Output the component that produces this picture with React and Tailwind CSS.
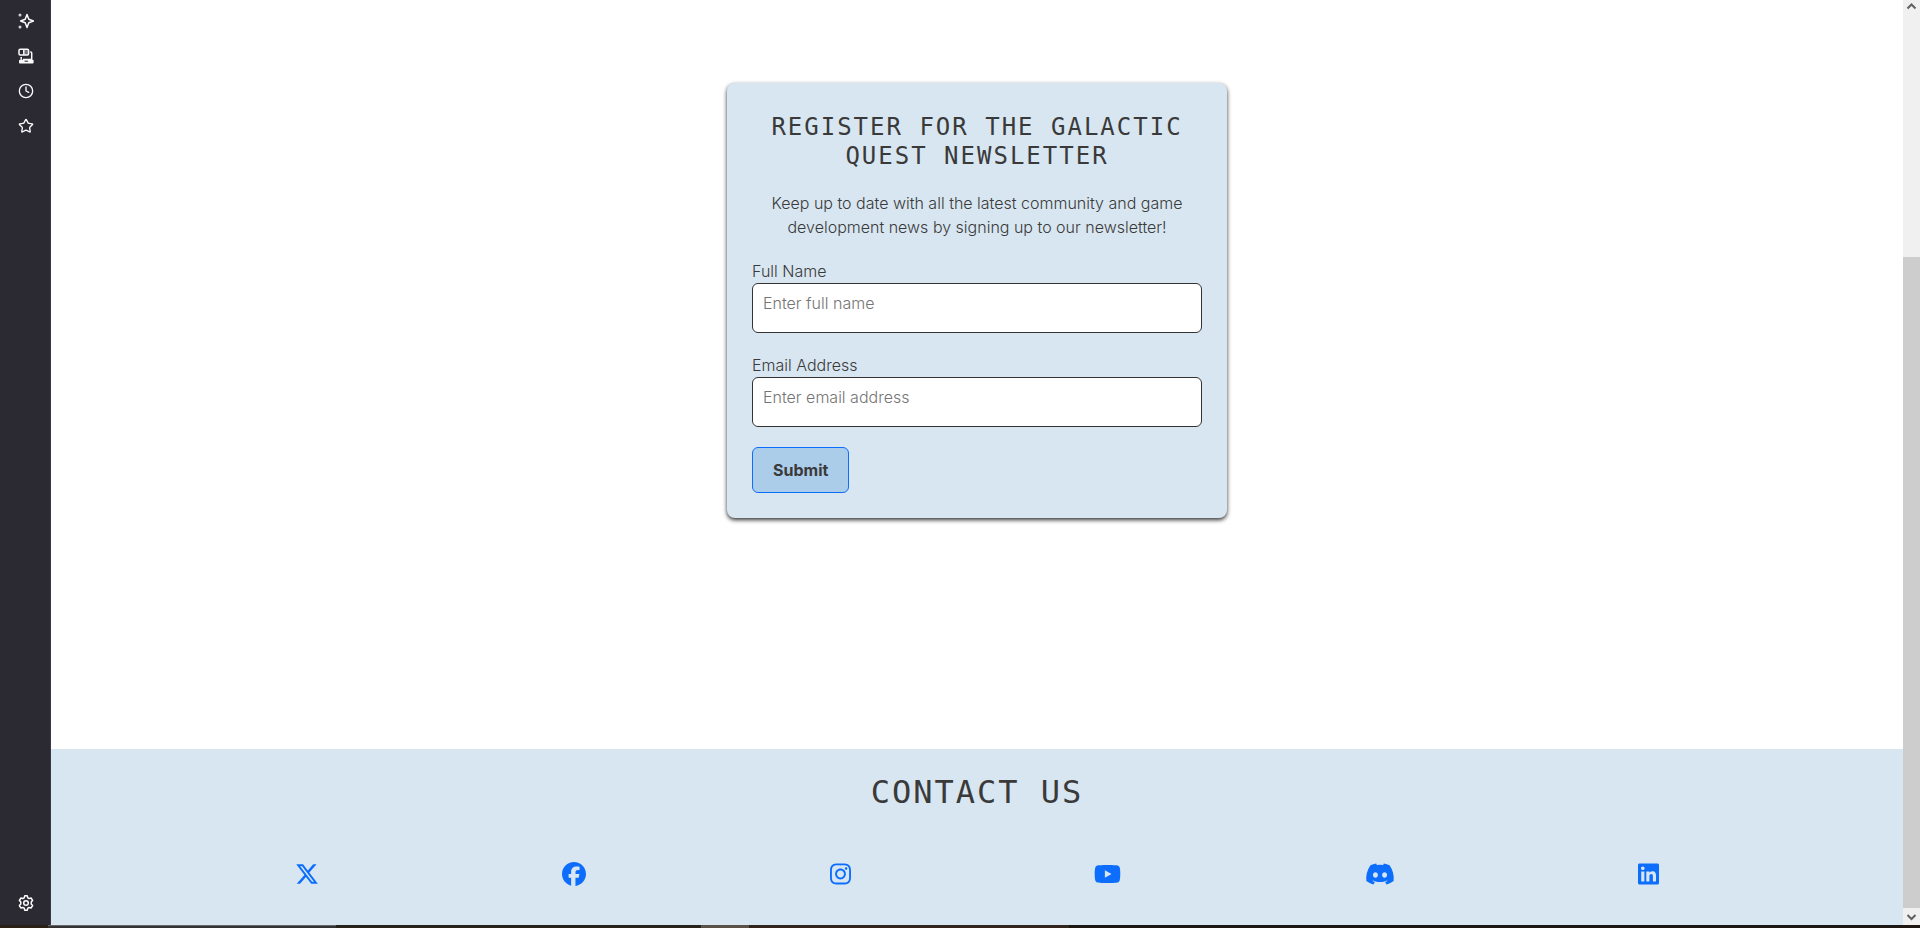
import React from "react";
import { FaXTwitter, FaFacebook, FaInstagram, FaYoutube, FaDiscord, FaLinkedin } from "react-icons/fa6";
import { Clock, Star } from "lucide-react";

const socials = [
  { label: "X", Icon: FaXTwitter, size: "h-6 w-6" },
  { label: "Facebook", Icon: FaFacebook, size: "h-6 w-6" },
  { label: "Instagram", Icon: FaInstagram, size: "h-6 w-[21px]" },
  { label: "YouTube", Icon: FaYoutube, size: "h-6 w-[27px]" },
  { label: "Discord", Icon: FaDiscord, size: "h-6 w-[30px]" },
  { label: "LinkedIn", Icon: FaLinkedin, size: "h-6 w-[21px]" },
];

function SparkleIcon() {
  return (
    <svg viewBox="0 0 16 16" className="size-4" fill="none" stroke="currentColor" strokeWidth="1.5" strokeLinejoin="round" aria-hidden="true">
      <path d="M9 1.4 10.8 6.2 15.4 8 10.8 9.8 9 14.6 7.2 9.8 2.6 8 7.2 6.2Z" />
      <circle cx="2" cy="2" r="1.5" fill="currentColor" stroke="none" opacity=".8" />
      <circle cx="2" cy="14" r="1.5" fill="currentColor" stroke="none" opacity=".8" />
    </svg>
  );
}

function DevicesIcon() {
  return (
    <svg viewBox="0 0 16 16" className="size-4" fill="none" stroke="currentColor" strokeWidth="1.5" strokeLinejoin="round" aria-hidden="true">
      <rect x="1" y="1.2" width="9.6" height="5.8" rx="1.2" />
      <path d="M6.2 1.2h3.2a1.2 1.2 0 0 1 1.2 1.2V7H6.2z" fill="currentColor" stroke="none" opacity=".35" />
      <path d="M5.8 1.2V7" />
      <path d="M3.2 9v2.8M12.2 4h.5a1 1 0 0 1 1 1v6.6H5" />
      <rect x="1" y="11.8" width="14.6" height="3.8" rx="1" fill="currentColor" stroke="none" />
      <path d="M6.5 13.2h3.6" stroke="#2b2a33" strokeWidth="1" />
    </svg>
  );
}

function GearIcon() {
  return (
    <svg viewBox="0 0 16 16" className="size-4" fill="none" stroke="currentColor" strokeWidth="1.5" strokeLinejoin="round" aria-hidden="true">
      <path d="M6.8.8h2.4l.6 2 1.4.8 2-.5 1.4 2.4-1.4 1.6v1.8l1.4 1.6-1.4 2.4-2-.5-1.4.8-.6 2H6.8l-.6-2-1.4-.8-2 .5-1.4-2.4 1.4-1.6V7.1L1.4 5.5l1.4-2.4 2 .5 1.4-.8z" />
      <circle cx="8" cy="8" r="2.3" />
    </svg>
  );
}

function Sidebar() {
  return (
    <nav aria-label="Browser tools" className="flex w-[51px] shrink-0 flex-col items-center justify-between border-r border-[#3a3944] bg-[#2b2a33] pt-[13px] pb-[14px] pl-0.5 text-[#fbfbfe]">
      <div className="flex flex-col gap-[19px]">
        <button type="button" aria-label="Assistant"><SparkleIcon /></button>
        <button type="button" aria-label="Synced tabs"><DevicesIcon /></button>
        <button type="button" aria-label="History"><Clock className="size-4" strokeWidth={2} /></button>
        <button type="button" aria-label="Bookmarks"><Star className="size-4" strokeWidth={2} /></button>
      </div>
      <button type="button" aria-label="Settings"><GearIcon /></button>
    </nav>
  );
}

function Field({ id, label, type, placeholder }) {
  return (
    <div className="mb-5">
      <label htmlFor={id} className="block">{label}</label>
      <input
        id={id}
        type={type}
        placeholder={placeholder}
        className="block h-[50px] w-full rounded-md border border-[#333] bg-white px-[10px] pb-[10px] placeholder:text-[#757575]"
      />
    </div>
  );
}

function Newsletter() {
  return (
    <main className="flex flex-1 flex-col items-center pt-[83px]">
      <form className="w-full max-w-[500px] rounded-lg bg-[#d8e6f1] px-[25px] pt-[30px] pb-[25px] shadow-[0_2px_4px_#333]">
        <h2 className="mb-5 text-center font-['DejaVu_Sans_Mono',monospace] text-[24px] leading-[29px] tracking-[2px] uppercase">
          Register for the Galactic Quest Newsletter
        </h2>
        <p className="mb-5 text-center">
          Keep up to date with all the latest community and game development news by signing up to our newsletter!
        </p>
        <Field id="full-name" label="Full Name" type="text" placeholder="Enter full name" />
        <Field id="email" label="Email Address" type="email" placeholder="Enter email address" />
        <button type="submit" className="h-[46px] rounded-md border border-[#0d6efd] bg-[#abcdea] px-5 font-bold">
          Submit
        </button>
      </form>
    </main>
  );
}

function Footer() {
  return (
    <footer className="h-44 bg-[#d8e6f1] pt-6">
      <h2 className="text-center font-['DejaVu_Sans_Mono',monospace] text-[32px] leading-[38px] tracking-[2px] uppercase">Contact Us</h2>
      <ul className="mt-[51px] flex justify-evenly text-[#0d6efd]">
        {socials.map(({ label, Icon, size }) => (
          <li key={label}>
            <a href="#" aria-label={label}><Icon className={size} /></a>
          </li>
        ))}
      </ul>
    </footer>
  );
}

function Scrollbar() {
  return (
    <div aria-hidden="true" className="flex w-[17px] shrink-0 flex-col items-center bg-[#f0f0f0] text-[#606060]">
      <svg viewBox="0 0 17 12" className="h-3 w-full" fill="none" stroke="currentColor" strokeWidth="2">
        <path d="M4.5 8.5 8.5 4.5l4 4" />
      </svg>
      <div className="mt-[245px] w-full flex-1 bg-[#cdcdcd]" />
      <svg viewBox="0 0 17 17" className="h-[17px] w-full" fill="none" stroke="currentColor" strokeWidth="2">
        <path d="m4.5 7 4 4 4-4" />
      </svg>
    </div>
  );
}

export default function App() {
  return (
    <div className="flex h-screen flex-col bg-white font-['Inter',sans-serif] text-[16px] leading-6 font-light text-[#3a3a3a]">
      <div className="flex min-h-0 flex-1">
        <Sidebar />
        <div className="flex min-w-0 flex-1 flex-col">
          <Newsletter />
          <Footer />
        </div>
        <Scrollbar />
      </div>
      <div aria-hidden="true" className="flex h-[3px] shrink-0 bg-[#1c1713]">
        <div className="w-12 bg-[#2a2015]" />
        <div className="w-72 border-t border-[#666] bg-[#333]" />
        <div className="w-[365px] bg-[#25231a]" />
        <div className="w-12 bg-[#5a5148]" />
        <div className="w-80 bg-[#33241d]" />
      </div>
    </div>
  );
}
